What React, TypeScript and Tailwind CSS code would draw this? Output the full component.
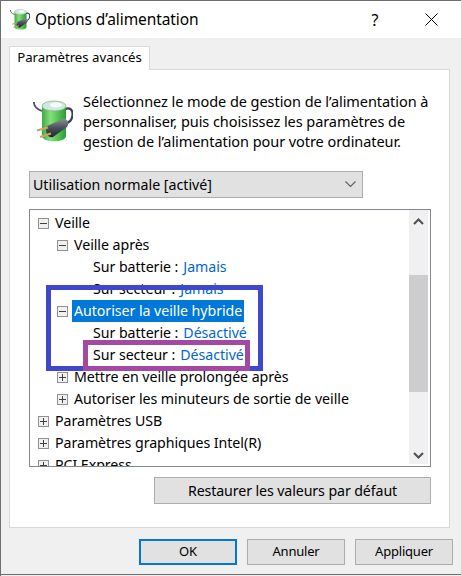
import React from "react";

function BatteryIcon({ size }: { size: number }) {
  return (
    <svg width={size} height={size * 1.05} viewBox="0 0 40 42" className="block shrink-0">
      <defs>
        <linearGradient id="bg" x1="0" x2="1" y1="0" y2="0">
          <stop offset="0" stopColor="#3fa846" />
          <stop offset="0.35" stopColor="#86e07a" />
          <stop offset="0.7" stopColor="#4fc052" />
          <stop offset="1" stopColor="#2c9a3c" />
        </linearGradient>
        <linearGradient id="pg" x1="0" x2="0" y1="0" y2="1">
          <stop offset="0" stopColor="#8a8f98" />
          <stop offset="0.5" stopColor="#4a4e58" />
          <stop offset="1" stopColor="#22252c" />
        </linearGradient>
      </defs>
      <path d="M0.8 2 C1 6 3 9 9 11" fill="none" stroke="#4a4e62" strokeWidth="1.8" />
      <path d="M32 9 C37 7 40 10 39.5 15 C39 21 36 23 31 24" fill="none" stroke="#3b3f52" strokeWidth="2.2" />
      <path d="M9 6 L9 36 C9 43 33 43 33 36 L33 6 Z" fill="url(#bg)" />
      <ellipse cx="21" cy="6" rx="12" ry="5" fill="#d3e8dc" stroke="#7fb98c" strokeWidth="0.8" />
      <ellipse cx="23" cy="5" rx="6" ry="2.4" fill="#f6fbf7" />
      <path d="M14 26 L30 19 C34 18 37 23 34 27 L20 37 C15 39 11 31 14 26 Z" fill="url(#pg)" />
      <path d="M4 30.5 L15 27.5" stroke="#c6a560" strokeWidth="2" />
      <path d="M7 37 L18 33.5" stroke="#c6a560" strokeWidth="2" />
    </svg>
  );
}

function Expander({ open }: { open: boolean }) {
  return (
    <span className="relative block w-[11px] h-[11px] border border-[#919191] bg-[#f0f0f0] shrink-0">
      <span className="absolute left-[1px] right-[1px] top-[4px] h-[1px] bg-[#404040]" />
      {!open && <span className="absolute top-[1px] bottom-[1px] left-[4px] w-[1px] bg-[#404040]" />}
    </span>
  );
}

function Row({ level, open, label, value, selected }: { level: 0 | 1 | 2; open?: boolean; label: string; value?: string; selected?: boolean }) {
  const pad = level === 0 ? "pl-[8px]" : level === 1 ? "pl-[27px]" : "pl-[63px]";
  return (
    <div className={`flex items-center h-[22px] whitespace-nowrap ${pad}`}>
      {open !== undefined && <Expander open={open} />}
      {open !== undefined && <span className="w-[6px] shrink-0" />}
      {selected ? (
        <span className="bg-[#0078d7] text-white h-[22px] leading-[22px] px-[2px] -ml-[2px]">{label}</span>
      ) : (
        <span>{label}</span>
      )}
      {value && <span className="text-[#0066cc] ml-[5px]">{value}</span>}
    </div>
  );
}

function Button({ children, focused, className }: { children: React.ReactNode; focused?: boolean; className?: string }) {
  return (
    <div className={`flex items-center justify-center bg-[#e1e1e1] text-black ${focused ? "border-2 border-[#0078d7]" : "border border-[#adadad]"} ${className ?? ""}`}>
      {children}
    </div>
  );
}

export default function App() {
  return (
    <div className="relative w-[461px] h-[576px] overflow-hidden bg-[#f0f0f0] text-black text-[14.2px] border-t border-l border-[#6e6e6e]" style={{ fontFamily: '"Noto Sans", "Open Sans", sans-serif' }}>
      <div className="h-[37px] bg-white flex items-center pl-[9px]">
        <BatteryIcon size={20} />
        <span className="ml-[5px] text-[15.5px] tracking-[-0.1px]">Options d’alimentation</span>
        <span className="ml-auto w-[30px] text-center text-[16px] mr-[35px]">?</span>
        <svg width="13" height="13" viewBox="0 0 13 13" className="mr-[23px]">
          <path d="M0.5 0.5 L12.5 12.5 M12.5 0.5 L0.5 12.5" stroke="#000" strokeWidth="1" />
        </svg>
      </div>

      <div className="ml-[8px] w-[441px] mt-[8px]">
        <div className="relative z-10 w-[141px] h-[24px] bg-white border border-b-0 border-[#d9d9d9] flex items-center justify-center text-[13.2px] pb-[2px] -mb-[1px]">
          Paramètres avancés
        </div>
        <div className="h-[459px] bg-white border border-[#d9d9d9] px-[19px] pt-[21px]">
          <div className="flex">
            <div className="pt-[9px] pl-[4px] w-[54px]">
              <BatteryIcon size={40} />
            </div>
            <p className="leading-[20px] whitespace-nowrap text-[14.5px] tracking-[-0.06px]">
              Sélectionnez le mode de gestion de l’alimentation à<br />
              personnaliser, puis choisissez les paramètres de<br />
              gestion de l’alimentation pour votre ordinateur.
            </p>
          </div>

          <div className="mt-[20px] w-[334px] h-[27px] bg-[#e1e1e1] border border-[#adadad] flex items-center pl-[3px] pr-[6px] justify-between">
            <span>Utilisation normale [activé]</span>
            <svg width="11" height="7" viewBox="0 0 11 7"><path d="M0.5 0.5 L5.5 5.5 L10.5 0.5" fill="none" stroke="#606060" strokeWidth="1.2" /></svg>
          </div>

          <div className="mt-[11px] w-[402px] h-[258px] border border-[#828790] bg-white flex overflow-hidden">
            <div className="flex-1 pt-[2px] overflow-hidden tracking-[-0.05px]">
              <Row level={0} open={true} label="Veille" />
              <Row level={1} open={true} label="Veille après" />
              <Row level={2} label="Sur batterie :" value="Jamais" />
              <Row level={2} label="Sur secteur :" value="Jamais" />
              <Row level={1} open={true} label="Autoriser la veille hybride" selected />
              <Row level={2} label="Sur batterie :" value="Désactivé" />
              <Row level={2} label="Sur secteur :" value="Désactivé" />
              <Row level={1} open={false} label="Mettre en veille prolongée après" />
              <Row level={1} open={false} label="Autoriser les minuteurs de sortie de veille" />
              <Row level={0} open={false} label="Paramètres USB" />
              <Row level={0} open={false} label="Paramètres graphiques Intel(R)" />
              <Row level={0} open={false} label="PCI Express" />
            </div>
            <div className="w-[19px] mr-[2px] h-[254px] bg-[#f0f0f0] flex flex-col items-center justify-between">
              <div className="h-[17px] flex items-center justify-center pt-[6px]">
                <svg width="11" height="7" viewBox="0 0 11 7"><path d="M1 6 L5.5 1.5 L10 6" fill="none" stroke="#505050" strokeWidth="2" /></svg>
              </div>
              <div className="w-[19px] h-[117px] bg-[#cdcdcd] mt-[35px] mb-[43px]" />
              <div className="h-[17px] flex items-center justify-center">
                <svg width="11" height="7" viewBox="0 0 11 7"><path d="M1 1 L5.5 5.5 L10 1" fill="none" stroke="#505050" strokeWidth="2" /></svg>
              </div>
            </div>
          </div>

          <div className="flex justify-end w-[402px] mt-[10px]">
            <Button className="w-[277px] h-[27px] tracking-[-0.1px]">Restaurer les valeurs par défaut</Button>
          </div>
        </div>
      </div>

      <div className="flex justify-end gap-[10px] mt-[11px] pr-[8px] text-[13px]">
        <Button focused className="w-[98px] h-[26px]">OK</Button>
        <Button className="w-[98px] h-[26px] tracking-[-0.2px]">Annuler</Button>
        <Button className="w-[98px] h-[26px] tracking-[-0.2px]">Appliquer</Button>
      </div>

      <div className="absolute left-[45px] top-[284px] w-[217px] h-[86px] border-[5px] border-[#3f48cc]" />
      <div className="absolute left-[82px] top-[339px] w-[167px] h-[31px] border-[5px] border-[#a349a4]" />
      <div className="absolute left-0 right-0 top-[573px] h-[1px] bg-[#6e6e6e]" />
    </div>
  );
}
